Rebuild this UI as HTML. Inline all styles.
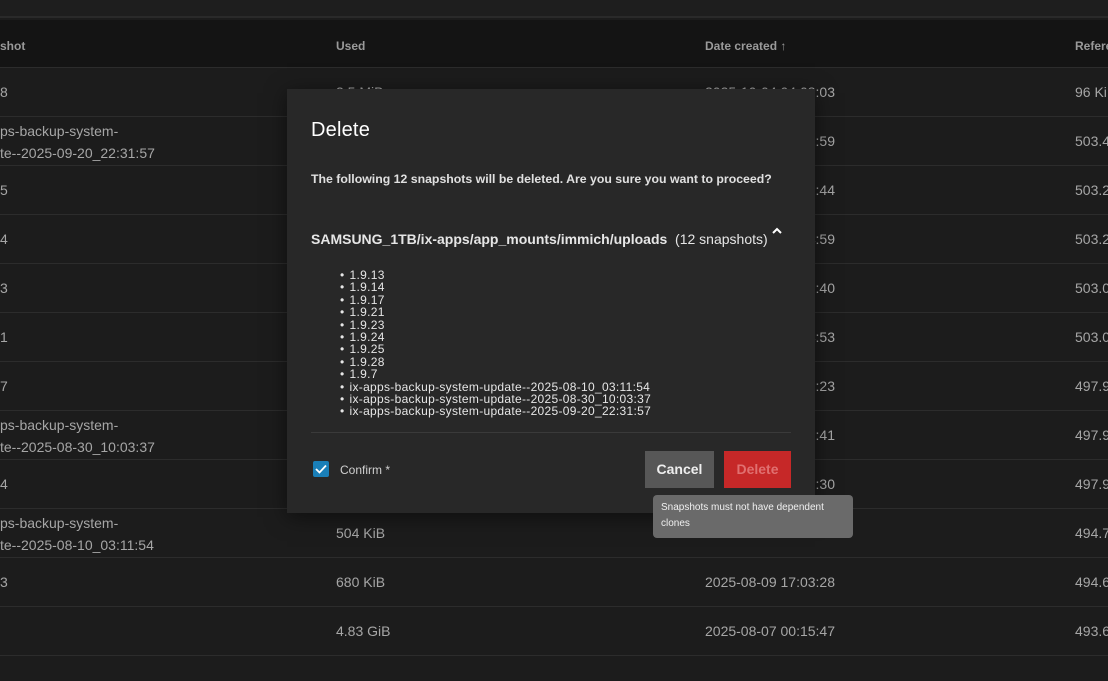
<!DOCTYPE html>
<html><head><meta charset="utf-8"><style>
*{margin:0;padding:0;box-sizing:border-box}
body{width:1108px;height:681px;overflow:hidden;background:#1c1c1c;font-family:"Liberation Sans",sans-serif;position:relative;color:#a8a8a8}
.top{position:absolute;left:0;top:0;width:1108px;height:18px;background:#1e1e1e;border-bottom:2px solid #2a2a2a}
.hdr{position:absolute;left:0;top:20px;width:1108px;height:48px;background:#141414;border-bottom:1px solid #2c2c2c;font-weight:bold;font-size:12px;color:#9a9a9a}
.hdr span,.row span{position:absolute;white-space:nowrap}
.row{position:absolute;left:0;width:1108px;height:49px;border-bottom:1px solid #2c2c2c;font-size:14px;color:#a6a6a6}
.c1{left:0}.c2{left:336px}.c3{left:705px}.c4{left:1075px}
.two{top:3px;line-height:22px}
.dlg{position:absolute;left:287px;top:89px;width:528px;height:424px;background:#282828;box-shadow:0 4px 20px rgba(0,0,0,.5)}
.dlg h1{position:absolute;left:24px;top:30px;font-size:20px;font-weight:normal;color:#fff;letter-spacing:.2px}
.msg{position:absolute;left:24px;top:83px;font-size:12.3px;font-weight:bold;color:#e0e0e0;white-space:nowrap}
.ds{position:absolute;left:24px;top:142px;font-size:14px;color:#e6e6e6}
ul{position:absolute;left:53px;top:180px;font-size:12px;color:#e6e6e6;list-style:none;white-space:nowrap;letter-spacing:.3px}
ul li{height:12.4px;line-height:12px;overflow:visible}
ul li:before{content:"•";margin-right:5px}
.sep{position:absolute;left:24px;top:343px;width:480px;height:1px;background:#3a3a3a}
.cb{position:absolute;left:26px;top:372px;width:16px;height:16px;background:#1a7fb8;border-radius:2px}
.cl{position:absolute;left:53px;top:374px;font-size:12px;color:#d0d0d0}
.btn{position:absolute;top:362px;height:37px;font-weight:bold;font-size:14px;text-align:center;line-height:37px}
.tip{position:absolute;left:653px;top:495px;width:200px;height:43px;background:#6a6a6a;border-radius:4px;color:#f0f0f0;font-size:10px;line-height:16px;padding:5px 8px}
</style></head><body>
<div class="top"></div>
<div class="hdr"><span class="c1" style="top:19px">shot</span><span class="c2" style="top:19px">Used</span><span class="c3" style="top:19px">Date created ↑</span><span class="c4" style="top:19px">Refere</span></div>

<div class="row" style="top:68px"><span class="c1" style="top:16px">8</span><span class="c2" style="top:16px">3.5 MiB</span><span class="c3" style="top:16px">2025-10-04 04:08:03</span><span class="c4" style="top:16px">96 KiB</span></div>
<div class="row" style="top:117px"><span class="c1 two">ps-backup-system-<br>te--2025-09-20_22:31:57</span><span class="c3" style="top:16px">2025-09-20 22:31:59</span><span class="c4" style="top:16px">503.4</span></div>
<div class="row" style="top:166px"><span class="c1" style="top:16px">5</span><span class="c3" style="top:16px">2025-09-18 06:46:44</span><span class="c4" style="top:16px">503.2</span></div>
<div class="row" style="top:215px"><span class="c1" style="top:16px">4</span><span class="c3" style="top:16px">2025-09-12 04:14:59</span><span class="c4" style="top:16px">503.2</span></div>
<div class="row" style="top:264px"><span class="c1" style="top:16px">3</span><span class="c3" style="top:16px">2025-09-06 05:05:40</span><span class="c4" style="top:16px">503.0</span></div>
<div class="row" style="top:313px"><span class="c1" style="top:16px">1</span><span class="c3" style="top:16px">2025-09-02 04:14:53</span><span class="c4" style="top:16px">503.0</span></div>
<div class="row" style="top:362px"><span class="c1" style="top:16px">7</span><span class="c3" style="top:16px">2025-08-31 02:02:23</span><span class="c4" style="top:16px">497.9</span></div>
<div class="row" style="top:411px"><span class="c1 two">ps-backup-system-<br>te--2025-08-30_10:03:37</span><span class="c3" style="top:16px">2025-08-30 10:03:41</span><span class="c4" style="top:16px">497.9</span></div>
<div class="row" style="top:460px"><span class="c1" style="top:16px">4</span><span class="c3" style="top:16px">2025-08-12 06:06:30</span><span class="c4" style="top:16px">497.9</span></div>
<div class="row" style="top:509px"><span class="c1 two">ps-backup-system-<br>te--2025-08-10_03:11:54</span><span class="c2" style="top:16px">504 KiB</span><span class="c4" style="top:16px">494.7</span></div>
<div class="row" style="top:558px"><span class="c1" style="top:16px">3</span><span class="c2" style="top:16px">680 KiB</span><span class="c3" style="top:16px">2025-08-09 17:03:28</span><span class="c4" style="top:16px">494.6</span></div>
<div class="row" style="top:607px"><span class="c2" style="top:16px">4.83 GiB</span><span class="c3" style="top:16px">2025-08-07 00:15:47</span><span class="c4" style="top:16px">493.6</span></div>

<div class="dlg">
<h1>Delete</h1>
<div class="msg">The following 12 snapshots will be deleted. Are you sure you want to proceed?</div>
<div class="ds"><b>SAMSUNG_1TB/ix-apps/app_mounts/immich/uploads</b>&nbsp; (12 snapshots)</div>
<svg style="position:absolute;left:484px;top:137px" width="12" height="10" viewBox="0 0 12 10"><path d="M2 7 L6 3 L10 7" stroke="#fff" stroke-width="2" fill="none"/></svg>
<ul><li>1.9.13</li><li>1.9.14</li><li>1.9.17</li><li>1.9.21</li><li>1.9.23</li><li>1.9.24</li><li>1.9.25</li><li>1.9.28</li><li>1.9.7</li><li>ix-apps-backup-system-update--2025-08-10_03:11:54</li><li>ix-apps-backup-system-update--2025-08-30_10:03:37</li><li>ix-apps-backup-system-update--2025-09-20_22:31:57</li></ul>
<div class="sep"></div>
<div class="cb"><svg width="16" height="16" viewBox="0 0 16 16"><path d="M3 8 L6.5 11.5 L13 4.5" stroke="#fff" stroke-width="1.8" fill="none"/></svg></div>
<div class="cl">Confirm *</div>
<div class="btn" style="left:358px;width:69px;background:#575757;color:#eee">Cancel</div>
<div class="btn" style="left:437px;width:67px;background:#c62828;color:#e07070">Delete</div>
</div>
<div class="tip">Snapshots must not have dependent clones</div>
</body></html>
